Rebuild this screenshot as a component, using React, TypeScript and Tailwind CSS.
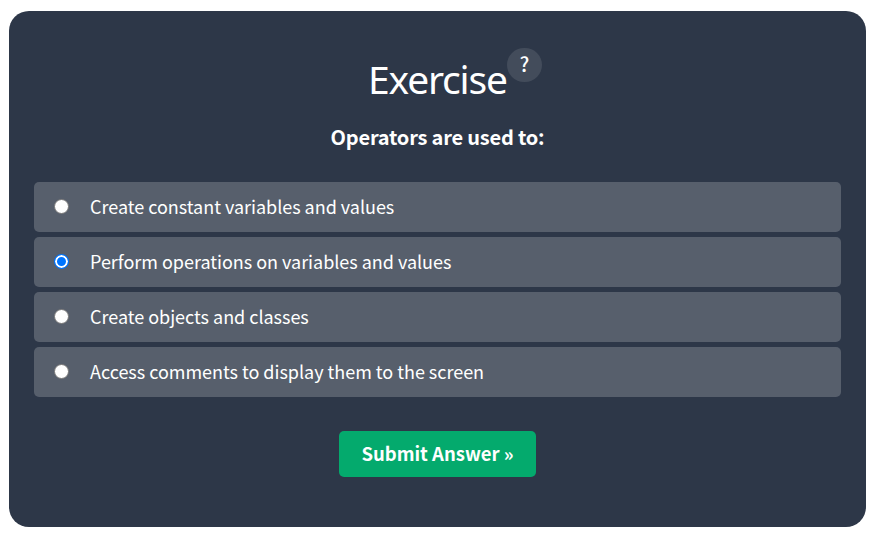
const options = [
  "Create constant variables and values",
  "Perform operations on variables and values",
  "Create objects and classes",
  "Access comments to display them to the screen",
];

function Radio({ checked }: { checked: boolean }) {
  return (
    <input
      type="radio"
      name="answer"
      defaultChecked={checked}
      className={
        "mr-[21px] size-[15px] shrink-0 -translate-y-px appearance-none rounded-full border bg-white " +
        "border-[#767676] checked:border-[#0075ff] checked:bg-[#0075ff] checked:shadow-[inset_0_0_0_2px_white]"
      }
    />
  );
}

export default function App() {
  return (
    <div className="h-[535px] w-[871px] bg-white pl-[9px] pt-[11px] font-['Noto_Sans_CJK_SC',sans-serif] text-white">
      <main className="flex h-[516px] w-[857px] flex-col items-center rounded-[20px] bg-[#2d3748] px-[25px] pt-[39px]">
        <div className="relative w-[139px]">
          <h1 className="whitespace-nowrap pb-[2px] font-['Noto_Sans',sans-serif] text-[39px] leading-[58px] tracking-[-1.2px]">Exercise</h1>
          <span className="absolute left-full top-[-2px] flex h-[34px] w-[35px] items-center justify-center rounded-full bg-[#434c5b] pb-[2px] text-[20px] font-medium">?</span>
        </div>
        <p className="mt-[10px] text-[20px] font-bold leading-[34px] tracking-[-0.2px]">Operators are used to:</p>
        <div className="mt-[28px] flex w-full flex-col gap-[5px]">
          {options.map((text, i) => (
            <label key={text} className="flex h-[50px] items-center rounded-[5px] bg-[#575f6c] pl-5 text-[18px]">
              <Radio checked={i === 1} />
              <span className="pb-[2px] tracking-[-0.02px]">{text}</span>
            </label>
          ))}
        </div>
        <button className="mt-[34px] h-[46px] w-[197px] rounded-[5px] bg-[#04aa6d] text-[18.5px] font-bold">Submit Answer »</button>
      </main>
    </div>
  );
}
